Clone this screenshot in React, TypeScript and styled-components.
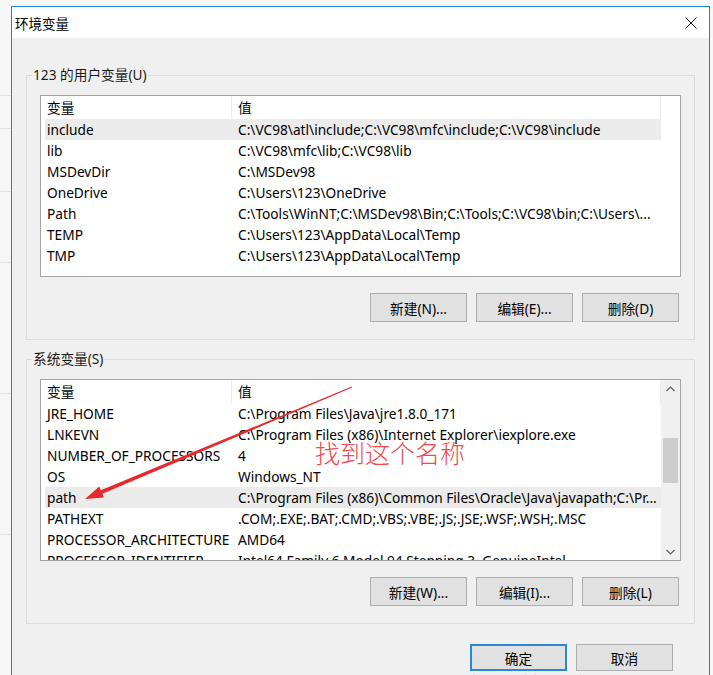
import styled, { createGlobalStyle } from "styled-components";

const GlobalStyle = createGlobalStyle`
  html, body {
    margin: 0;
    padding: 0;
    background: #f7f7f7;
  }
  * {
    box-sizing: border-box;
  }
`;

const userVars = [
  ["include", "C:\\VC98\\atl\\include;C:\\VC98\\mfc\\include;C:\\VC98\\include"],
  ["lib", "C:\\VC98\\mfc\\lib;C:\\VC98\\lib"],
  ["MSDevDir", "C:\\MSDev98"],
  ["OneDrive", "C:\\Users\\123\\OneDrive"],
  ["Path", "C:\\Tools\\WinNT;C:\\MSDev98\\Bin;C:\\Tools;C:\\VC98\\bin;C:\\Users\\..."],
  ["TEMP", "C:\\Users\\123\\AppData\\Local\\Temp"],
  ["TMP", "C:\\Users\\123\\AppData\\Local\\Temp"],
];

const systemVars = [
  ["JRE_HOME", "C:\\Program Files\\Java\\jre1.8.0_171"],
  ["LNKEVN", "C:\\Program Files (x86)\\Internet Explorer\\iexplore.exe"],
  ["NUMBER_OF_PROCESSORS", "4"],
  ["OS", "Windows_NT"],
  ["path", "C:\\Program Files (x86)\\Common Files\\Oracle\\Java\\javapath;C:\\Pr..."],
  ["PATHEXT", ".COM;.EXE;.BAT;.CMD;.VBS;.VBE;.JS;.JSE;.WSF;.WSH;.MSC"],
  ["PROCESSOR_ARCHITECTURE", "AMD64"],
  ["PROCESSOR_IDENTIFIER", "Intel64 Family 6 Model 94 Stepping 3, GenuineIntel"],
];

const Page = styled.div`
  position: relative;
  width: 713px;
  height: 675px;
  overflow: hidden;
  display: flex;
  padding-top: 6px;
  font-family: "Noto Sans", "Noto Sans CJK SC", sans-serif;
  font-size: 13.7px;
  color: #000;
`;

const SideStrip = styled.div`
  width: 11px;
  display: flex;
  flex-direction: column;
`;

const SideLine = styled.div<{ gap: number }>`
  margin-top: ${(p) => p.gap}px;
  border-top: 1px solid #e2e2e2;
  height: 0;
`;

const Dialog = styled.div`
  width: 699px;
  height: 690px;
  border: 1px solid #1883d7;
  background: #f0f0f0;
  display: flex;
  flex-direction: column;
`;

const TitleBar = styled.div`
  height: 31px;
  background: #fff;
  display: flex;
  align-items: center;
  justify-content: space-between;
  padding: 0 12px 0 3px;
  font-size: 13.5px;
`;

const Body = styled.div`
  padding: 29px 14px 0 14px;
  display: flex;
  flex-direction: column;
`;

const Group = styled.fieldset<{ top?: number }>`
  margin: ${(p) => p.top ?? 0}px 0 0 0;
  min-width: 0;
  border: 1px solid #dcdcdc;
  padding: 12px 13px 17px 13px;
`;

const Legend = styled.legend`
  margin-left: -8px;
  padding: 0 1px;
  line-height: 16px;
  font-size: 13.7px;
  color: #1a1a1a;
`;

const List = styled.div`
  height: 182px;
  border: 1px solid #a3a3a3;
  background: #fff;
  display: flex;
  overflow: hidden;
`;

const ListMain = styled.div`
  flex: 1;
  overflow: hidden;
`;

const HeaderRow = styled.div`
  display: grid;
  grid-template-columns: 191px 429px;
  height: 23px;
`;

const HeaderCell = styled.div`
  line-height: 24px;
  padding-left: 6px;
  border-right: 1px solid #ececec;
  white-space: nowrap;
`;

const Row = styled.div<{ selected?: boolean }>`
  display: grid;
  grid-template-columns: 187px 429px;
  width: 616px;
  margin-left: 4px;
  height: 21px;
  line-height: 22px;
  background: ${(p) => (p.selected ? "#ebebeb" : "transparent")};
`;

const Cell = styled.div<{ value?: boolean }>`
  padding-left: ${(p) => (p.value ? 6 : 2)}px;
  white-space: nowrap;
  overflow: hidden;
`;

const ScrollBar = styled.div`
  width: 19px;
  background: #f0f0f0;
  display: flex;
  flex-direction: column;
`;

const ScrollArrow = styled.div`
  height: 17px;
  display: flex;
  align-items: center;
  justify-content: center;
`;

const ScrollTrack = styled.div`
  flex: 1;
  padding: 0 2px;
`;

const ScrollThumb = styled.div<{ offset: number; size: number }>`
  margin-top: ${(p) => p.offset}px;
  height: ${(p) => p.size}px;
  background: #cdcdcd;
`;

const ButtonRow = styled.div`
  display: flex;
  justify-content: flex-end;
  gap: 9px;
  margin-top: 16px;
  padding-right: 2px;
`;

const Button = styled.div<{ primary?: boolean; h?: number }>`
  width: 97px;
  height: ${(p) => p.h ?? 29}px;
  background: #e1e1e1;
  border: ${(p) => (p.primary ? "2px solid #2a88d6" : "1px solid #adadad")};
  display: flex;
  align-items: center;
  justify-content: center;
  font-size: 13.7px;
`;

const Footer = styled.div`
  display: flex;
  justify-content: flex-end;
  gap: 9px;
  margin-top: 20px;
  padding-right: 22px;
`;

const Overlay = styled.svg`
  position: absolute;
  left: 0;
  top: 0;
  pointer-events: none;
`;

const Note = styled.div`
  position: absolute;
  left: 315px;
  top: 436px;
  font-family: "Noto Sans CJK SC", sans-serif;
  font-weight: 300;
  font-size: 25px;
  line-height: 32px;
  color: #f4484b;
  pointer-events: none;
`;

const Watermark = styled.div`
  position: absolute;
  left: 472px;
  top: 669px;
  font-family: "Noto Sans", sans-serif;
  font-size: 15px;
  color: rgba(0, 0, 0, 0.13);
  white-space: nowrap;
  pointer-events: none;
`;

function Chevron({ up }: { up?: boolean }) {
  return (
    <svg width="9" height="6" viewBox="0 0 9 6">
      <path
        d={up ? "M0.5 5 L4.5 1 L8.5 5" : "M0.5 1 L4.5 5 L8.5 1"}
        fill="none"
        stroke="#606060"
        strokeWidth="1.2"
      />
    </svg>
  );
}

function VarList({
  rows,
  selected,
  scroll,
}: {
  rows: string[][];
  selected: number;
  scroll?: boolean;
}) {
  return (
    <List>
      <ListMain>
        <HeaderRow>
          <HeaderCell>变量</HeaderCell>
          <HeaderCell>值</HeaderCell>
        </HeaderRow>
        {rows.map((r, i) => (
          <Row key={r[0]} selected={i === selected}>
            <Cell>{r[0]}</Cell>
            <Cell value>{r[1]}</Cell>
          </Row>
        ))}
      </ListMain>
      {scroll && (
        <ScrollBar>
          <ScrollArrow>
            <Chevron up />
          </ScrollArrow>
          <ScrollTrack>
            <ScrollThumb offset={41} size={45} />
          </ScrollTrack>
          <ScrollArrow>
            <Chevron />
          </ScrollArrow>
        </ScrollBar>
      )}
    </List>
  );
}

export default function App() {
  return (
    <>
      <GlobalStyle />
      <Page>
        <SideStrip>
          <SideLine gap={89} />
          <SideLine gap={32} />
          <SideLine gap={62} />
          <SideLine gap={70} />
          <SideLine gap={130} />
          <SideLine gap={140} />
        </SideStrip>
        <Dialog>
          <TitleBar>
            <span>环境变量</span>
            <svg width="12" height="12" viewBox="0 0 12 12">
              <path d="M0.5 0.5 L11.5 11.5 M11.5 0.5 L0.5 11.5" stroke="#111" strokeWidth="1" />
            </svg>
          </TitleBar>
          <Body>
            <Group>
              <Legend>123 的用户变量(U)</Legend>
              <VarList rows={userVars} selected={0} />
              <ButtonRow>
                <Button>新建(N)...</Button>
                <Button>编辑(E)...</Button>
                <Button>删除(D)</Button>
              </ButtonRow>
            </Group>
            <Group top={11}>
              <Legend>系统变量(S)</Legend>
              <VarList rows={systemVars} selected={4} scroll />
              <ButtonRow>
                <Button>新建(W)...</Button>
                <Button>编辑(I)...</Button>
                <Button>删除(L)</Button>
              </ButtonRow>
            </Group>
            <Footer>
              <Button primary h={27}>
                确定
              </Button>
              <Button h={27}>取消</Button>
            </Footer>
          </Body>
        </Dialog>
        <Overlay width="713" height="675" viewBox="0 0 713 675">
          <polygon
            points="352.2,387.5 351.8,386.5 100.8,490.2 99.3,486.5 85,499 103.9,497.5 102.4,493.8"
            fill="#e8282b"
          />
        </Overlay>
        <Note>找到这个名称</Note>
        <Watermark>https://blog.csdn.net/qq_40651500</Watermark>
      </Page>
    </>
  );
}
